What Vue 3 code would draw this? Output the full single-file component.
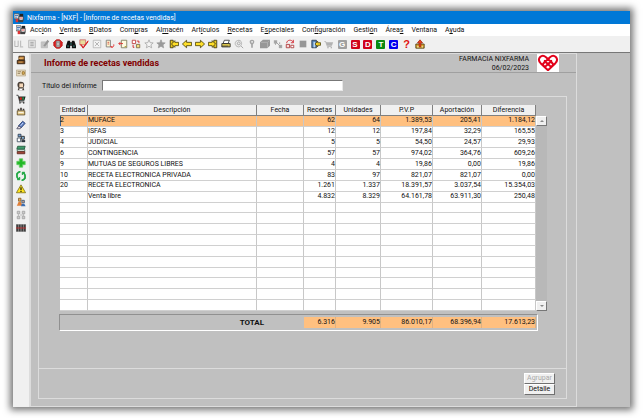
<template>
  <div class="window">
    <header class="title-bar">
      <svg class="app-icon" viewBox="0 0 12 12">
        <path v-for="(p, i) in icons.app" :key="i" :d="p[0]" :fill="p[1]" :stroke="p[2] || 'none'" />
      </svg>
      <span>Nixfarma - [NXF] - [Informe de recetas vendidas]</span>
    </header>

    <nav class="menu-bar">
      <svg class="app-icon" viewBox="0 0 12 12">
        <path v-for="(p, i) in icons.app" :key="i" :d="p[0]" :fill="p[1]" :stroke="p[2] || 'none'" />
      </svg>
      <button v-for="item in menu" :key="item.join('')" type="button" class="menu-item">{{ item[0] }}<u>{{ item[1] }}</u>{{ item[2] }}</button>
    </nav>

    <div class="toolbar">
      <button v-for="(tool, i) in toolbar" :key="i" type="button" class="tool">
        <span v-if="tool.letter" class="letter" :class="tool.kind">{{ tool.letter }}</span>
        <svg v-else viewBox="0 0 12 12">
          <path v-for="(p, j) in icons[tool]" :key="j" :d="p[0]" :fill="p[1]" :stroke="p[2] || 'none'" />
        </svg>
      </button>
    </div>

    <div class="body">
      <aside class="sidebar">
        <button v-for="name in sidebar" :key="name" type="button" class="tool">
          <svg viewBox="0 0 12 12">
            <path v-for="(p, j) in icons[name]" :key="j" :d="p[0]" :fill="p[1]" :stroke="p[2] || 'none'" />
          </svg>
        </button>
      </aside>

      <main class="report">
        <div class="report-header">
          <h1>Informe de recetas vendidas</h1>
          <div class="pharmacy">
            <div>FARMACIA NIXFARMA</div>
            <div>06/02/2023</div>
          </div>
          <svg class="logo" viewBox="0 0 22 18">
            <path d="M11 16.2L3.6 9.2C-.6 4.6 4.8 -.6 9 3.2L15.4 9.2C17 11.2 14.8 13.4 12.8 11.8L7 6.4M11 16.2L18.4 9.2C22.6 4.6 17.2 -.6 13 3.2L6.6 9.2C5 11.2 7.2 13.4 9.2 11.8L15 6.4" />
          </svg>
        </div>

        <div class="title-field">
          <label for="titulo">Título del informe</label>
          <input id="titulo" v-model="titulo" type="text">
        </div>

        <section class="group">
          <div class="grid-area">
            <div class="grid-wrap">
              <table class="grid">
                <colgroup>
                  <col v-for="col in columns" :key="col.label" :class="col.size">
                </colgroup>
                <thead>
                  <tr>
                    <th v-for="col in columns" :key="col.label">{{ col.label }}</th>
                  </tr>
                </thead>
                <tbody>
                  <tr v-for="(row, i) in rows" :key="i" :class="{ selected: i === selected }" @click="selected = i">
                    <td v-for="(cell, j) in row" :key="j" :class="{ num: j > 2 }">{{ cell }}</td>
                  </tr>
                </tbody>
              </table>
              <div class="scrollbar">
                <button type="button" class="arrow"><svg viewBox="0 0 6 4"><path d="M1 3L3 1L5 3Z" /></svg></button>
                <button type="button" class="arrow"><svg viewBox="0 0 6 4"><path d="M1 1L3 3L5 1Z" /></svg></button>
              </div>
            </div>

            <div class="totals">
              <strong>TOTAL</strong>
              <span v-for="total in totals" :key="total" class="total">{{ total }}</span>
            </div>
          </div>

          <footer class="actions">
            <button type="button" disabled>Agrupar</button>
            <button type="button">Detalle</button>
          </footer>
        </section>
      </main>
      <div class="desktop"></div>
    </div>
  </div>
</template>

<script setup>
import { ref } from 'vue'

const titulo = ref('')
const selected = ref(0)

// Texto antes, letra subrayada, texto después
const menu = [
  ['Acc', 'i', 'ón'],
  ['', 'V', 'entas'],
  ['', 'B', 'Datos'],
  ['Com', 'p', 'ras'],
  ['Al', 'm', 'acén'],
  ['Art', 'í', 'culos'],
  ['', 'R', 'ecetas'],
  ['E', 's', 'peciales'],
  ['Con', 'f', 'iguración'],
  ['Gesti', 'ó', 'n'],
  ['Área', 's', ''],
  ['Ventana', '', ''],
  ['A', 'y', 'uda']
]

const toolbar = [
  'exit', 'note', 'edit', 'stop', 'binoculars', 'check', 'cancel', 'undo',
  'pageBack', 'swap', 'star', 'starFull', 'first', 'prev', 'next', 'last',
  'scanner', 'zoom', 'pin', 'layers', 'link', 'refreshRed', 'square', 'door', 'cartGrey',
  { letter: 'G', kind: 'grey' },
  { letter: 'S', kind: 'red' },
  { letter: 'D', kind: 'red' },
  { letter: 'T', kind: 'green' },
  { letter: 'C', kind: 'blue' },
  { letter: '?', kind: 'help' },
  'upload'
]

const sidebar = [
  'register', 'card', 'person', 'cart', 'box', 'pen', 'people',
  'books', 'cross', 'recycle', 'warning', 'users', 'usersGrey', 'barcode'
]

// Cada trazo: [d, relleno, borde]
const icons = {
  app: [
    ['M0 1H6V7H0Z', '#e9eef2', '#555'],
    ['M1 3H5M1 5H4', 'none', '#36a'],
    ['M6 4H11V9H6Z', '#fff', '#333'],
    ['M7 1H11V4H7Z', '#222'],
    ['M2 7H5V11H2Z', '#d33'],
    ['M5 8H11V11H5Z', '#444'],
    ['M7 6H10', 'none', '#d22']
  ],
  exit: [['M1 2V9H5V2M8 2V9', 'none', '#aaa'], ['M7 9.5H11', 'none', '#aaa']],
  note: [['M2 1.5H10V10.5H2Z', '#e3e3e3', '#b4b4b4'], ['M4 4H8M4 6H8M4 8H8', 'none', '#999']],
  edit: [['M1.5 3.5H9V10.5H1.5Z', '#c4c4c4', '#bbb'], ['M4 8L9 1L11 3L6 9Z', '#969696']],
  stop: [
    ['M4 1H8L11 4V8L8 11H4L1 8V4Z', '#d22', '#b11'],
    ['M4 2.5H8V9.5H4Z', '#eee', '#777'],
    ['M5 4H7M5 6H7M5 8H7', 'none', '#666']
  ],
  binoculars: [
    ['M2 2H5V4H7V2H10L12 8V11H7V8H5V11H0V8Z', '#101010'],
    ['M1.5 8.5H3.5M8.5 8.5H10.5M6 5V7', 'none', '#3aa39a']
  ],
  check: [
    ['M1 1H8V7H1Z', '#e8dc9a', '#c66'],
    ['M2 6L5 10L11 2', 'none', '#e0191c'],
    ['M2 7L5 11L11 3', 'none', '#c00']
  ],
  cancel: [['M1.5 1.5H10.5V10.5H1.5Z', '#f4f4f4', '#b6b6b6'], ['M3.5 3.5L8.5 8.5M8.5 3.5L3.5 8.5', 'none', '#aaa']],
  undo: [
    ['M1.5 1.5H6.5V9.5H1.5Z', '#fff6cf', '#777'],
    ['M3 4H5M3 6H5', 'none', '#c44'],
    ['M7 9C9 11 11 9 10.5 6.5M6.5 9.5H9', 'none', '#d11']
  ],
  pageBack: [
    ['M4 1.5H10.5V10.5H4Z', '#fffbe0', '#775'],
    ['M1 5.5H6M3 3.5L1 5.5L3 7.5', 'none', '#d22'],
    ['M8 9H10', 'none', '#a92']
  ],
  swap: [
    ['M1.5 1.5H5.5V5.5H1.5Z', '#fff', '#b33'],
    ['M6.5 6.5H10.5V10.5H6.5Z', '#f5dc80', '#764'],
    ['M7 2.5H9.5V5M4 10H2.5V7', 'none', '#c11']
  ],
  star: [['M6 1L7.4 4.4L11 4.7L8.3 7L9.2 10.6L6 8.7L2.8 10.6L3.7 7L1 4.7L4.6 4.4Z', '#f4f4f4', '#a8a8a8']],
  starFull: [['M6 1L7.4 4.4L11 4.7L8.3 7L9.2 10.6L6 8.7L2.8 10.6L3.7 7L1 4.7L4.6 4.4Z', '#999', '#a0a0a0']],
  first: [['M1.5 1.5H5V10.5H1.5Z', '#e9c91f', '#3b3410'], ['M3 6L7 2V4H11.5V8H7V10Z', '#ffdf28', '#4b430d']],
  prev: [['M.5 6L5.5 1.5V4H11.5V8H5.5V10.5Z', '#ffdf28', '#4b430d']],
  next: [['M11.5 6L6.5 1.5V4H.5V8H6.5V10.5Z', '#ffdf28', '#4b430d']],
  last: [['M7 1.5H10.5V10.5H7Z', '#e9c91f', '#3b3410'], ['M9 6L5 2V4H.5V8H5V10Z', '#ffdf28', '#4b430d']],
  scanner: [
    ['M4 1.5H10L8.5 5.5H2.5Z', '#fff', '#333'],
    ['M1 5.5H11V9.5H1Z', '#e8d050', '#222'],
    ['M1 8.5H9', 'none', '#333']
  ],
  zoom: [
    ['M6 1.5C0 1.5 0 9 5.5 9.5C10 9 10.5 2 6 1.5Z', '#ececec', '#aaa'],
    ['M5.5 3.5C8 3.5 8 7 5.5 7C3.5 7 3.5 4 5.5 3.5M8.5 8.5L11 11', 'none', '#999']
  ],
  pin: [['M6 1C2.5 1 2.5 5 5 6.5V10.5H7V6.5C9.5 5 9.5 1 6 1Z', '#a5a5a5'], ['M5.2 2.5H7V4.5H5.2Z', '#eee']],
  layers: [['M3.5 1H12V8L8.5 11H0V4Z', '#979797'], ['M1 4H9V10M9 4L11 2', 'none', '#b5b5b5']],
  link: [['M1 1.5H5V5.5H1Z', '#a8a8a8'], ['M7 7H11V11H7Z', '#a8a8a8'], ['M3 3L9 9M3 7V5M8 4V6', 'none', '#999']],
  refreshRed: [
    ['M2 5C2 1 8 0 10 4M10 1V4.5H7', 'none', '#d01822'],
    ['M1.5 6.5H5.5V10.5H1.5Z', '#f7d9d9', '#a33'],
    ['M7 7.5H10.5V10.5H7Z', '#fff', '#a33']
  ],
  square: [['M2 2H10V10H2Z', '#969696']],
  door: [
    ['M1 1.5H6.5V10.5H1Z', '#5583b8', '#26384e'],
    ['M3 3.5H5V10H3Z', '#bcd6ed'],
    ['M5 6L8 2.5V4.5H11.5V7.5H8V9.5Z', '#ffdc2c', '#4f4813']
  ],
  cartGrey: [['M2 4H11L9.5 8H4Z', '#b2b2b2'], ['M0.5 3H2L4 9H9', 'none', '#b2b2b2'], ['M4 10H5.5V11H4ZM8 10H9.5V11H8Z', '#999']],
  upload: [
    ['M1 6H11V11H1Z', '#dfaa32', '#493810'],
    ['M6 1L9 4.5H7V9H5V4.5H3Z', '#f2451d', '#a62412'],
    ['M2.5 9.5H4.5M8 9.5H9.5', 'none', '#fff']
  ],
  register: [
    ['M3.5 1.5H10V6H3.5Z', '#c98c48', '#2d1c0c'],
    ['M1.5 6.5H10.5V10.5H1.5Z', '#7f4a1d', '#29190a'],
    ['M3 4H8M3 8.5H8', 'none', '#f1c070']
  ],
  card: [
    ['M.5 2.5H11.5V9.5H.5Z', '#e9dcc0', '#b9a98c'],
    ['M2 4.5H6M2 6.5H5', 'none', '#8a7757'],
    ['M7.5 4.5H10V7.5H7.5Z', '#f0c667', '#8d6829']
  ],
  person: [
    ['M6 1C1 0 1 6 3 8L2 11H10L9 8C11 5 10 1 6 1Z', '#4a4038'],
    ['M4 3H8.5V7.5H4Z', '#f4d7b8'],
    ['M4 9H8.5L7 11H4Z', '#fff']
  ],
  cart: [
    ['M3 3H11.5L10 8H4Z', '#1e2a26'],
    ['M.5 1.5H2.5L4.5 9.5H10', 'none', '#333'],
    ['M4 10H5.5V11.5H4ZM8.5 10H10V11.5H8.5Z', '#111'],
    ['M4.5 4H7V7H4.5Z', '#d12b21'],
    ['M7.5 4H9.5V7H7.5Z', '#2c8a4a']
  ],
  box: [
    ['M1.5 4.5H10.5V9.5H1.5Z', '#e9cf8d', '#5a4723'],
    ['M2 2H4V4H2ZM5 1H7V4H5ZM8 2H10V4H8Z', '#403a35'],
    ['M3 6.5H9', 'none', '#fff']
  ],
  pen: [
    ['M3 7L8 1.5L11 4L6 9.5Z', '#5c7fc5', '#223666'],
    ['M1 10.5H5L6 9L3.5 7Z', '#efe8f0', '#43435c'],
    ['M5.5 7L8.5 3.5', 'none', '#dce7ff']
  ],
  people: [
    ['M2.5 1.5H6V4.5H2.5Z', '#77a2cf', '#2c3b4e'],
    ['M1.5 6H5.5V10.5H1.5Z', '#fff', '#3c4c5c'],
    ['M6.5 4H10V7.5H6.5Z', '#88b3d7', '#222'],
    ['M6.5 8.5H11V11H6.5Z', '#29323c']
  ],
  books: [
    ['M2 1.5H11L10 5H1Z', '#3e9d6c', '#215238'],
    ['M1.5 5.5H10.5V7.5H1.5Z', '#fff', '#386d54'],
    ['M1.5 8H10.5V10.5H1.5Z', '#a74b3d', '#5b241b']
  ],
  cross: [['M4 1H8V4H11V8H8V11H4V8H1V4H4Z', '#2ec02e', '#64c965'], ['M5 2H7V5H10V7H7V10H5V7H2V5H5Z', '#22b827']],
  recycle: [
    ['M5 1.5C1 1.5 1 7 3 9L4.5 7.5V10.5H1.5L2.2 9.8C-1 6 0 .5 5 .5ZM7 10.5C11 10.5 11 5 9 3L7.5 4.5V1.5H10.5L9.8 2.2C13 6 12 11.5 7 11.5Z', '#15a33a', '#15a33a']
  ],
  warning: [['M6 1L11.5 10.5H.5Z', '#ffe51c', '#7e711b'], ['M5.3 4H6.7V7.5H5.3ZM5.3 8.5H6.7V9.7H5.3Z', '#111']],
  users: [
    ['M3 1.5H6V5H3Z', '#e2ab55', '#875f2b'],
    ['M1 10.5L3 6H6L8 10.5Z', '#e07f38'],
    ['M7 4H10V7H7Z', '#d5a580', '#36577d'],
    ['M7 8H10L11.5 11H6Z', '#3c6db0']
  ],
  usersGrey: [
    ['M1.5 1.5H4.5V4.5H1.5ZM7.5 1.5H10.5V4.5H7.5ZM1.5 7.5H4.5V10.5H1.5ZM7.5 7.5H10.5V10.5H7.5Z', '#ccc', '#a2a2a2'],
    ['M5 6H8M3 5V7M9 5V7', 'none', '#aaa']
  ],
  barcode: [
    ['M0 1.5H12V10.5H0Z', '#777'],
    ['M1.5 2V10M4.5 2V10M7.5 2V10M10.5 2V10', 'none', '#1c1c1c'],
    ['M0 6H12', 'none', '#d22b2b']
  ]
}

const columns = [
  { label: 'Entidad', size: 'w-entidad' },
  { label: 'Descripción', size: 'w-descripcion' },
  { label: 'Fecha', size: 'w-fecha' },
  { label: 'Recetas', size: 'w-recetas' },
  { label: 'Unidades', size: 'w-unidades' },
  { label: 'P.V.P', size: 'w-pvp' },
  { label: 'Aportación', size: 'w-aportacion' },
  { label: 'Diferencia', size: 'w-diferencia' }
]

const data = [
  ['2', 'MUFACE', '', '62', '64', '1.389,53', '205,41', '1.184,12'],
  ['3', 'ISFAS', '', '12', '12', '197,84', '32,29', '165,55'],
  ['4', 'JUDICIAL', '', '5', '5', '54,50', '24,57', '29,93'],
  ['6', 'CONTINGENCIA', '', '57', '57', '974,02', '364,76', '609,26'],
  ['9', 'MUTUAS DE SEGUROS LIBRES', '', '4', '4', '19,86', '0,00', '19,86'],
  ['10', 'RECETA ELECTRONICA PRIVADA', '', '83', '97', '821,07', '821,07', '0,00'],
  ['20', 'RECETA ELECTRONICA', '', '1.261', '1.337', '18.391,57', '3.037,54', '15.354,03'],
  ['', 'Venta libre', '', '4.832', '8.329', '64.161,78', '63.911,30', '250,48']
]

// La rejilla siempre muestra 18 filas
const rows = [...data, ...Array.from({ length: 18 - data.length }, () => Array(8).fill(''))]

const totals = ['6.316', '9.905', '86.010,17', '68.396,94', '17.613,23']
</script>

<style>
body {
  margin: 0;
  background: #fff;
}
</style>

<style scoped>
* {
  box-sizing: border-box;
}

.window {
  display: flex;
  flex-direction: column;
  min-height: calc(100vh - 22px);
  margin: 11px 13px;
  background: #c0c0c0;
  box-shadow: 0 0 7px 3px rgba(0, 0, 0, 0.55);
  font-family: Roboto, "Liberation Sans", Arial, sans-serif;
  font-size: 7px;
  line-height: 10px;
  color: #111;
}

button {
  font: inherit;
  color: inherit;
  margin: 0;
  padding: 0;
  border: 0;
  background: none;
}

svg {
  display: block;
}

/* Barra de título y menú */
.title-bar {
  display: flex;
  align-items: center;
  gap: 3px;
  height: 13px;
  padding-left: 1px;
  background: #0078d7;
  color: #fff;
}

.app-icon {
  width: 10px;
  height: 10px;
}

.menu-bar {
  display: flex;
  align-items: center;
  gap: 8px;
  height: 12px;
  padding-left: 3px;
  background: #fff;
}

.menu-bar .app-icon {
  margin-right: -4px;
}

.menu-item {
  white-space: nowrap;
}

/* Barra de herramientas */
.toolbar {
  display: grid;
  grid-template-columns: repeat(32, 1fr);
  align-items: center;
  height: 17px;
  padding-right: calc(100% - 413px);
  background: #f0f0f0;
  border-bottom: 1px solid #777;
}

.tool {
  display: flex;
  align-items: center;
  justify-content: center;
}

.tool svg {
  width: 10px;
  height: 10px;
}

.letter {
  width: 9px;
  height: 9px;
  border-radius: 1px;
  color: #fff;
  font-family: "Liberation Sans", Arial, sans-serif;
  font-size: 8px;
  font-weight: bold;
  line-height: 9px;
  text-align: center;
}

.letter.grey {
  background: #a0a0a0;
}

.letter.red {
  background: #d0021b;
}

.letter.green {
  background: #0a8a12;
}

.letter.blue {
  background: #0000f0;
}

.letter.help {
  color: #e01010;
  font-size: 11px;
}

.body {
  flex: 1;
  display: flex;
}

.sidebar {
  display: grid;
  grid-template-rows: repeat(14, 1fr);
  align-self: stretch;
  width: 16px;
  padding: 1px 1px 173px 0;
  background: #f0f0f0;
}

.report {
  flex: 1;
  display: flex;
  flex-direction: column;
  border: 1px solid #dcdcdc;
  border-left-width: 2px;
}

.desktop {
  width: 53px;
}

/* Cabecera */
.report-header {
  display: flex;
  align-items: center;
  height: 19px;
  padding-left: 13px;
  padding-right: 17px;
  border-bottom: 1px solid #a0a0a0;
}

h1 {
  flex: 1;
  margin: 0;
  color: #800000;
  font-size: 9px;
}

.pharmacy {
  margin-right: 8px;
  padding-top: 2px;
  text-align: right;
  line-height: 9px;
}

.logo {
  width: 22px;
  height: 18px;
  background: #fff;
}

.logo path {
  fill: none;
  stroke: #e2001a;
  stroke-width: 2;
}

.title-field {
  display: flex;
  align-items: center;
  gap: 5px;
  margin: 7px 0 5px 11px;
}

.title-field input {
  width: 241px;
  height: 11px;
  padding: 0 2px;
  border: 1px solid #e8e8e8;
  border-top-color: #777;
  border-left-color: #777;
  background: #fff;
  font: inherit;
  outline: none;
}

/* Rejilla */
.group {
  flex: 1;
  display: flex;
  flex-direction: column;
  margin: 0 9px 7px 7px;
  border: 1px solid #dcdcdc;
}

.grid-area {
  flex: 1;
  padding: 8px 19px 0 21px;
}

.grid-wrap {
  display: flex;
}

.grid {
  flex: 1;
  width: 0;
  height: 206px;
  table-layout: fixed;
  border-collapse: separate;
  border-spacing: 0;
  background: #fff;
}

.w-entidad { width: 28px; }
.w-fecha { width: 47px; }
.w-recetas { width: 32px; }
.w-unidades { width: 45px; }
.w-pvp { width: 52px; }
.w-aportacion { width: 49px; }
.w-diferencia { width: 54px; }

.grid th {
  height: 11px;
  padding: 0;
  background: #f0f0f0;
  border-right: 1px solid #808080;
  border-bottom: 1px solid #808080;
  font-weight: normal;
  line-height: 9px;
}

.grid td {
  height: 10px;
  padding: 0;
  border-right: 1px solid #c8c8c8;
  border-bottom: 1px solid #d0d0d0;
  line-height: 9px;
  white-space: nowrap;
}

.grid .num {
  text-align: right;
}

.grid .selected td {
  background: #ffc080;
}

.grid .selected td:first-child {
  box-shadow: inset 1px 0 #3a5f8f;
}

.scrollbar {
  display: flex;
  flex-direction: column;
  justify-content: space-between;
  width: 11px;
  margin-top: 11px;
  background: #b8b8b8;
}

.arrow {
  display: flex;
  align-items: center;
  justify-content: center;
  height: 10px;
  background: #f0f0f0;
  border: 1px solid #fff;
  border-right-color: #777;
  border-bottom-color: #777;
}

.arrow svg {
  width: 6px;
  height: 4px;
  fill: #888;
}

.totals {
  display: grid;
  grid-template-columns: 1fr 32px 45px 52px 49px 54px;
  align-items: center;
  height: 17px;
  margin: 3px 9px 0 -1px;
  padding-right: 1px;
  border: 1px solid #fff;
  border-top-color: #909090;
  border-left-color: #909090;
}

.totals strong {
  padding-right: 40px;
  font-size: 8px;
  text-align: right;
}

.total {
  height: 11px;
  border-right: 1px solid #e0b080;
  background: #ffc080;
  text-align: right;
}

/* Botones */
.actions {
  display: flex;
  flex-direction: column;
  align-items: flex-end;
  padding: 4px 11px 3px;
  border-top: 1px solid #dcdcdc;
}

.actions button {
  width: 31px;
  height: 11px;
  background: #f0f0f0;
  border: 1px solid #fff;
  border-right-color: #707070;
  border-bottom-color: #707070;
  line-height: 9px;
}

.actions button:disabled {
  color: #a8a8a8;
}
</style>
